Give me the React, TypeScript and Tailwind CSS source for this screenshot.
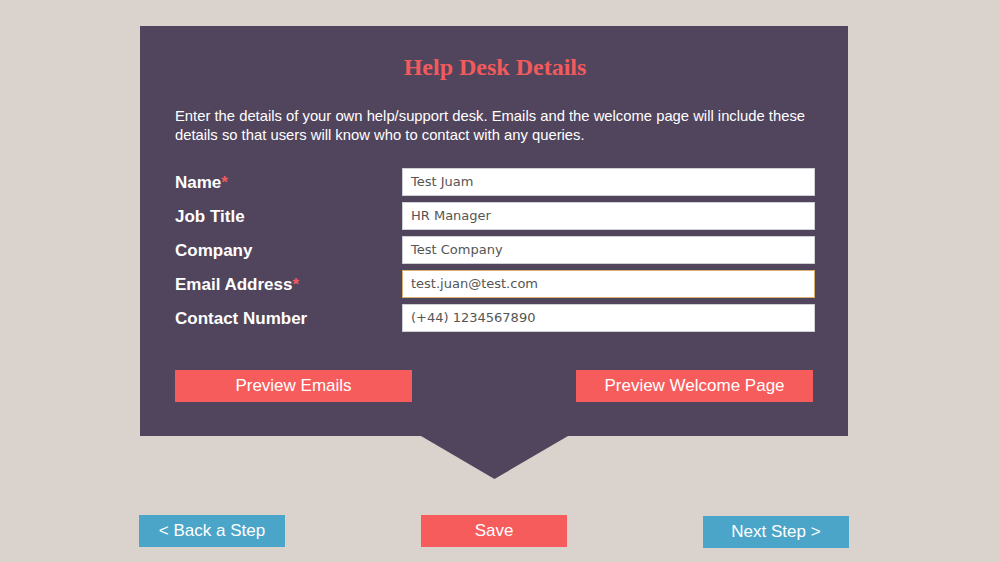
import React from "react";

const rows = [
  { label: "Name", req: true, value: "Test Juam" },
  { label: "Job Title", req: false, value: "HR Manager" },
  { label: "Company", req: false, value: "Test Company" },
  { label: "Email Address", req: true, value: "test.juan@test.com", focus: true },
  { label: "Contact Number", req: false, value: "(+44) 1234567890" },
];

export default function App() {
  return (
    <div className="w-[1000px] h-[562px] bg-[#d9d2cd] overflow-hidden pt-[26px] [font-family:'Liberation_Sans',Arial,sans-serif]">
      <div className="ml-[140px] w-[708px]">
        <div className="bg-[#51445d] pt-[27px] pb-[34px] pl-[35px] pr-[33px]">
          <h1 className="text-center text-[#f15b5c] text-[24px] leading-[28px] font-bold [font-family:'Liberation_Serif','Times_New_Roman',serif]">
            Help Desk Details
          </h1>
          <p className="mt-[26px] text-white text-[14.8px] leading-[19px]">
            Enter the details of your own help/support desk. Emails and the welcome page will include these details so that users will know who to contact with any queries.
          </p>
          <div className="mt-[23px] flex flex-col gap-[6px]">
            {rows.map((r) => (
              <div key={r.label} className="flex items-center h-[28px]">
                <div className="w-[227px] text-white font-bold text-[17px] leading-[20px] pt-[2px]">
                  {r.label}
                  {r.req && <span className="text-[#f15b5c]">*</span>}
                </div>
                <div
                  className={`w-[413px] h-[28px] bg-white border flex items-center pl-[8px] text-[13px] text-[#555] [font-family:'DejaVu_Sans',Verdana,sans-serif] ${
                    r.focus ? "border-[#d8b06a]" : "border-[#cfcfd6]"
                  }`}
                >
                  {r.value}
                </div>
              </div>
            ))}
          </div>
          <div className="mt-[38px] flex justify-between pr-[2px]">
            <button className="w-[237px] h-[32px] bg-[#f75c5c] text-white text-[17px]">
              Preview Emails
            </button>
            <button className="w-[237px] h-[32px] bg-[#f75c5c] text-white text-[17px]">
              Preview Welcome Page
            </button>
          </div>
        </div>
        <div className="flex justify-center">
          <svg width="147" height="43" viewBox="0 0 147 43" className="block">
            <polygon points="0,0 147,0 73.5,43" fill="#51445d" />
          </svg>
        </div>
      </div>
      <div className="ml-[139px] w-[710px] mt-[36px] flex justify-between items-start">
        <button className="w-[146px] h-[32px] bg-[#4ba5c9] text-white text-[17px]">
          &lt; Back a Step
        </button>
        <button className="w-[146px] h-[32px] bg-[#f75c5c] text-white text-[17px]">
          Save
        </button>
        <button className="w-[146px] h-[32px] mt-[1px] bg-[#4ba5c9] text-white text-[17px]">
          Next Step &gt;
        </button>
      </div>
    </div>
  );
}
